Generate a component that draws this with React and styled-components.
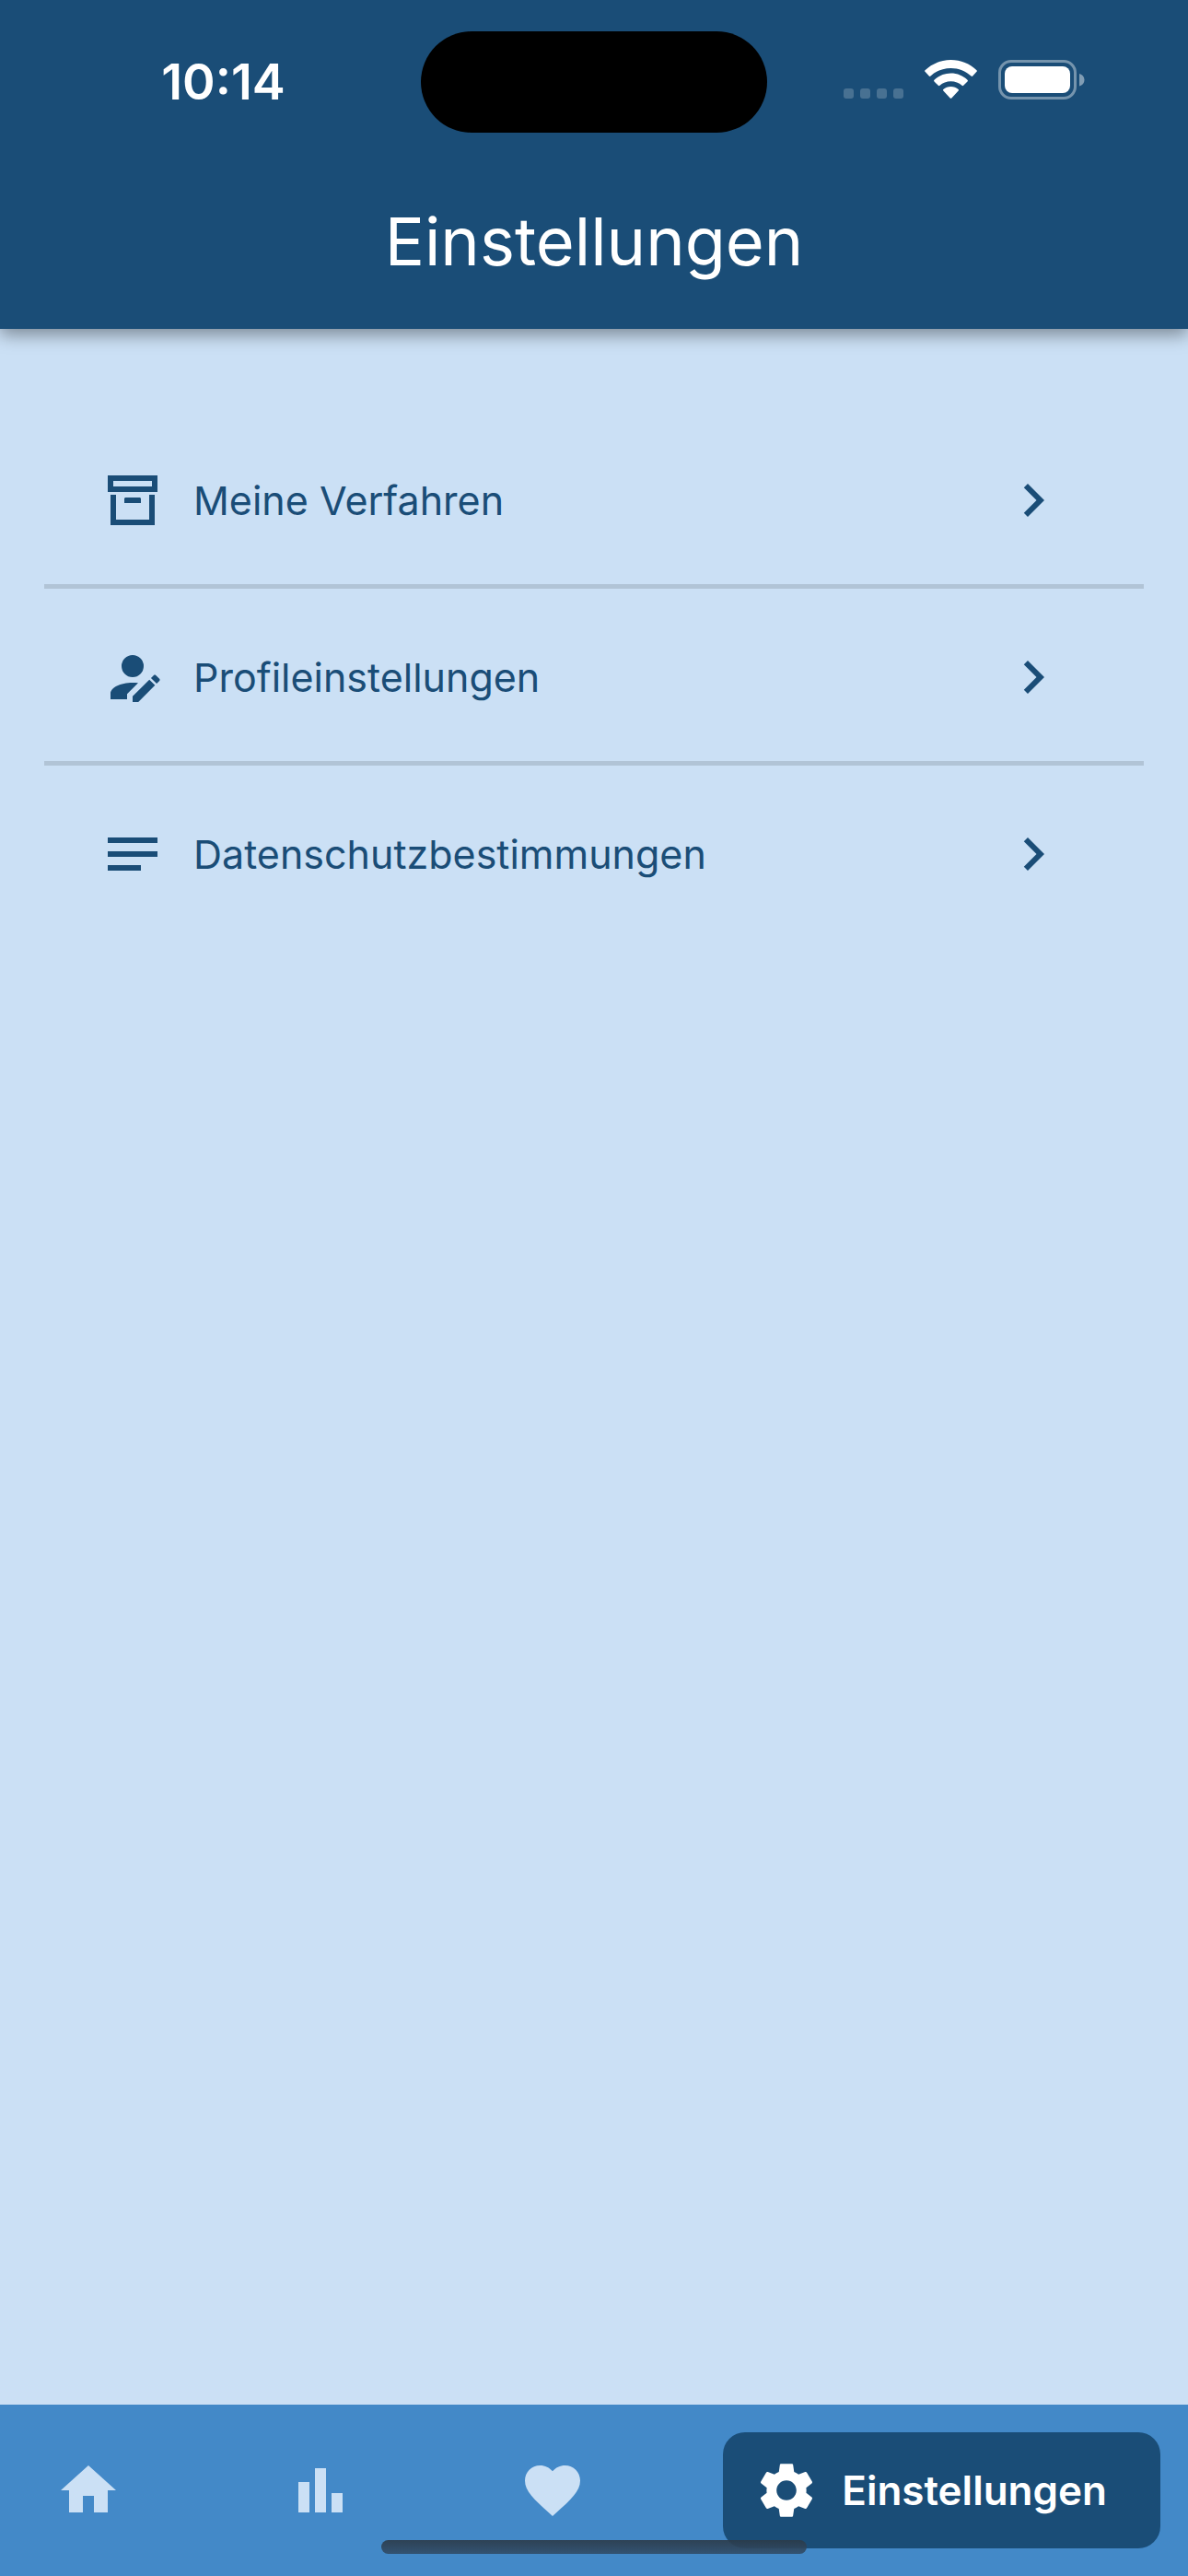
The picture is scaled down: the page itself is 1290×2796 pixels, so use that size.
import React from "react";
import styled, { createGlobalStyle, css } from "styled-components";

const color = {
  navy: "#1a4d77",
  sky: "#cbe0f5",
  blue: "#4389c8",
  line: "#b1c4d6",
  white: "#ffffff",
};

const GlobalStyle = createGlobalStyle`
  *, *::before, *::after { box-sizing: border-box; }
  body {
    margin: 0;
    background: ${color.sky};
    font-family: Inter, "Liberation Sans", sans-serif;
    -webkit-font-smoothing: antialiased;
  }
`;

const Screen = styled.div`
  display: flex;
  flex-direction: column;
  min-height: 100vh;
  background: ${color.sky};
`;

const Header = styled.header`
  background: ${color.navy};
  color: ${color.white};
  box-shadow: 0 6px 18px rgba(0, 0, 0, 0.4);
  z-index: 1;
`;

const StatusBar = styled.div`
  display: grid;
  grid-template-columns: 1fr auto 1fr;
  align-items: center;
  padding: 34px 0 32px;
`;

const Clock = styled.time`
  padding-left: 28px;
  text-align: center;
  font-size: 54px;
  line-height: 64px;
  font-weight: 600;
`;

const Island = styled.div`
  width: 376px;
  height: 110px;
  border-radius: 55px;
  background: #000000;
`;

const Indicators = styled.div`
  display: flex;
  justify-content: flex-end;
  align-items: flex-end;
  gap: 23px;
  padding: 0 112px 5px 0;
`;

const Title = styled.h1`
  margin: 0;
  padding: 42px 0 51px;
  text-align: center;
  font-size: 72px;
  line-height: 88px;
  font-weight: 400;
`;

const Content = styled.main`
  flex: 1;
  padding: 90px 48px;
`;

const List = styled.ul`
  list-style: none;
  margin: 0;
  padding: 0;
`;

const Item = styled.li`
  padding-top: 5px;
  border-bottom: 5px solid ${color.line};

  &:last-child {
    border-bottom-color: transparent;
  }
`;

const RowLink = styled.a`
  display: flex;
  align-items: center;
  gap: 30px;
  padding: 55px 84px 55px 60px;
  color: ${color.navy};
  text-decoration: none;
`;

const RowLabel = styled.span`
  flex: 1;
  font-size: 43px;
  line-height: 56px;
`;

const Glyph = styled.svg`
  flex: none;
  display: block;
  width: 72px;
  height: 72px;
  fill: currentColor;
`;

const TabBar = styled.nav`
  position: sticky;
  bottom: 0;
  display: flex;
  justify-content: space-between;
  padding: 30px;
  background: ${color.blue};
`;

const Tab = styled.button`
  display: flex;
  align-items: center;
  gap: 24px;
  height: 126px;
  margin: 0;
  padding: 0 30px;
  border: 0;
  border-radius: 24px;
  background: transparent;
  color: ${color.sky};
  font-family: inherit;
  font-size: 44px;
  line-height: 56px;
  font-weight: 600;
  cursor: pointer;

  ${({ $active }) =>
    $active &&
    css`
      padding: 0 58px 0 33px;
      background: ${color.navy};
      color: ${color.white};
    `}
`;

const HomeIndicator = styled.div`
  position: absolute;
  left: 50%;
  bottom: 24px;
  width: 462px;
  height: 15px;
  margin-left: -231px;
  border-radius: 8px;
  background: linear-gradient(rgba(43, 58, 72, 0.9), rgba(49, 77, 105, 0.9));
  pointer-events: none;
`;

const icons = {
  archive:
    "M20 21H4V10H6V19H18V10H20V21M3 3H21V9H3V3M9.5 11H14.5C14.78 11 15 11.22 15 11.5V13H9V11.5C9 11.22 9.22 11 9.5 11M5 5V7H19V5H5Z",
  profile:
    "M21.7 13.35L20.7 14.35L18.65 12.3L19.65 11.3C19.86 11.09 20.21 11.09 20.42 11.3L21.7 12.58C21.91 12.79 21.91 13.14 21.7 13.35M12 18.94L18.06 12.88L20.11 14.93L14.06 21H12V18.94M12 14C7.58 14 4 15.79 4 18V20H10V18.11L14 14.11C13.34 14.03 12.67 14 12 14M12 4A4 4 0 0 0 8 8A4 4 0 0 0 12 12A4 4 0 0 0 16 8A4 4 0 0 0 12 4Z",
  notes: "M3 18h12v-2H3v2zM3 6v2h18V6H3zm0 7h18v-2H3v2z",
  chevron: "M10 6L8.59 7.41 13.17 12l-4.58 4.59L10 18l6-6z",
  home: "M10 20v-6h4v6h5v-8h3L12 3 2 12h3v8z",
  chart: "M4 9h4v11H4zm12 4h4v7h-4zm-6-9h4v16h-4z",
  heart:
    "M12 21.35l-1.45-1.32C5.4 15.36 2 12.28 2 8.5 2 5.42 4.42 3 7.5 3c1.74 0 3.41.81 4.5 2.09C13.09 3.81 14.76 3 16.5 3 19.58 3 22 5.42 22 8.5c0 3.78-3.4 6.86-8.55 11.54L12 21.35z",
  settings:
    "M19.14 12.94c.04-.3.06-.61.06-.94 0-.32-.02-.64-.07-.94l2.03-1.58c.18-.14.23-.41.12-.61l-1.92-3.32c-.12-.22-.37-.29-.59-.22l-2.39.96c-.5-.38-1.03-.7-1.62-.94l-.36-2.54c-.04-.24-.24-.41-.48-.41h-3.84c-.24 0-.43.17-.47.41l-.36 2.54c-.59.24-1.13.57-1.62.94l-2.39-.96c-.22-.08-.47 0-.59.22L2.74 8.87c-.12.21-.08.47.12.61l2.03 1.58c-.05.3-.09.63-.09.94s.02.64.07.94l-2.03 1.58c-.18.14-.23.41-.12.61l1.92 3.32c.12.22.37.29.59.22l2.39-.96c.5.38 1.03.7 1.62.94l.36 2.54c.05.24.24.41.48.41h3.84c.24 0 .44-.17.47-.41l.36-2.54c.59-.24 1.13-.56 1.62-.94l2.39.96c.22.08.47 0 .59-.22l1.92-3.32c.12-.22.07-.47-.12-.61l-2.01-1.58zM12 15.6c-1.98 0-3.6-1.62-3.6-3.6s1.62-3.6 3.6-3.6 3.6 1.62 3.6 3.6-1.62 3.6-3.6 3.6z",
};

const Icon = ({ name }) => (
  <Glyph viewBox="0 0 24 24" aria-hidden="true">
    <path d={icons[name]} />
  </Glyph>
);

const Signal = () => (
  <svg width="65" height="12" viewBox="0 0 65 12" fill="#fff" opacity="0.2" aria-hidden="true">
    {[0, 18, 36, 54].map((x) => (
      <rect key={x} x={x} y="0" width="11" height="11" rx="3" />
    ))}
  </svg>
);

const Wifi = () => (
  <svg width="57" height="43" viewBox="0 0 57 43" fill="#fff" aria-hidden="true">
    <path d="M28.500 0C39.300 0 49.200 4.300 56.500 11.200Q57.300 12 56.500 12.800L52.200 17.500Q51.400 18.300 50.500 17.500C44.700 12 37 8.900 28.500 8.900S12.300 12 6.500 17.500Q5.600 18.300 4.800 17.500L.5 12.800Q-.3 12 .5 11.200C7.800 4.300 17.700 0 28.500 0Z" />
    <path d="M28.500 14.500C35.500 14.500 41.800 17.200 46.500 21.700Q47.400 22.500 46.500 23.400L42.200 27.800Q41.400 28.500 40.500 27.700C37.300 24.900 33.100 23.200 28.500 23.200S19.700 24.900 16.500 27.700Q15.600 28.500 14.800 27.800L10.500 23.400Q9.600 22.500 10.500 21.700C15.200 17.200 21.500 14.500 28.500 14.500Z" />
    <path d="M28.500 28.900C31.700 28.900 34.500 30 36.700 31.900Q37.500 32.700 36.700 33.500L29.300 41.400Q28.500 42.200 27.700 41.400L20.300 33.500Q19.500 32.700 20.300 31.900C22.500 30 25.300 28.900 28.500 28.900Z" />
  </svg>
);

const Battery = () => (
  <svg width="94" height="43" viewBox="0 0 94 43" aria-hidden="true">
    <rect x="1.500" y="1.500" width="82" height="40" rx="12.500" fill="none" stroke="#fff" strokeWidth="3" opacity="0.4" />
    <rect x="7" y="7" width="71" height="29" rx="8" fill="#fff" />
    <path d="M88 15C91.500 16 93.500 18.700 93.500 21.700S91.500 27.500 88 28.500Z" fill="#fff" opacity="0.45" />
  </svg>
);

const entries = [
  { icon: "archive", label: "Meine Verfahren", href: "#verfahren" },
  { icon: "profile", label: "Profileinstellungen", href: "#profil" },
  { icon: "notes", label: "Datenschutzbestimmungen", href: "#datenschutz" },
];

const tabs = [
  { icon: "home", name: "Startseite" },
  { icon: "chart", name: "Statistik" },
  { icon: "heart", name: "Favoriten" },
];

export default function App() {
  return (
    <>
      <GlobalStyle />
      <Screen>
        <Header>
          <StatusBar>
            <Clock>10:14</Clock>
            <Island />
            <Indicators>
              <Signal />
              <Wifi />
              <Battery />
            </Indicators>
          </StatusBar>
          <Title>Einstellungen</Title>
        </Header>
        <Content>
          <List>
            {entries.map(({ icon, label, href }) => (
              <Item key={label}>
                <RowLink href={href}>
                  <Icon name={icon} />
                  <RowLabel>{label}</RowLabel>
                  <Icon name="chevron" />
                </RowLink>
              </Item>
            ))}
          </List>
        </Content>
        <TabBar>
          {tabs.map(({ icon, name }) => (
            <Tab key={icon} type="button" aria-label={name}>
              <Icon name={icon} />
            </Tab>
          ))}
          <Tab type="button" $active aria-current="page">
            <Icon name="settings" />
            Einstellungen
          </Tab>
          <HomeIndicator />
        </TabBar>
      </Screen>
    </>
  );
}
